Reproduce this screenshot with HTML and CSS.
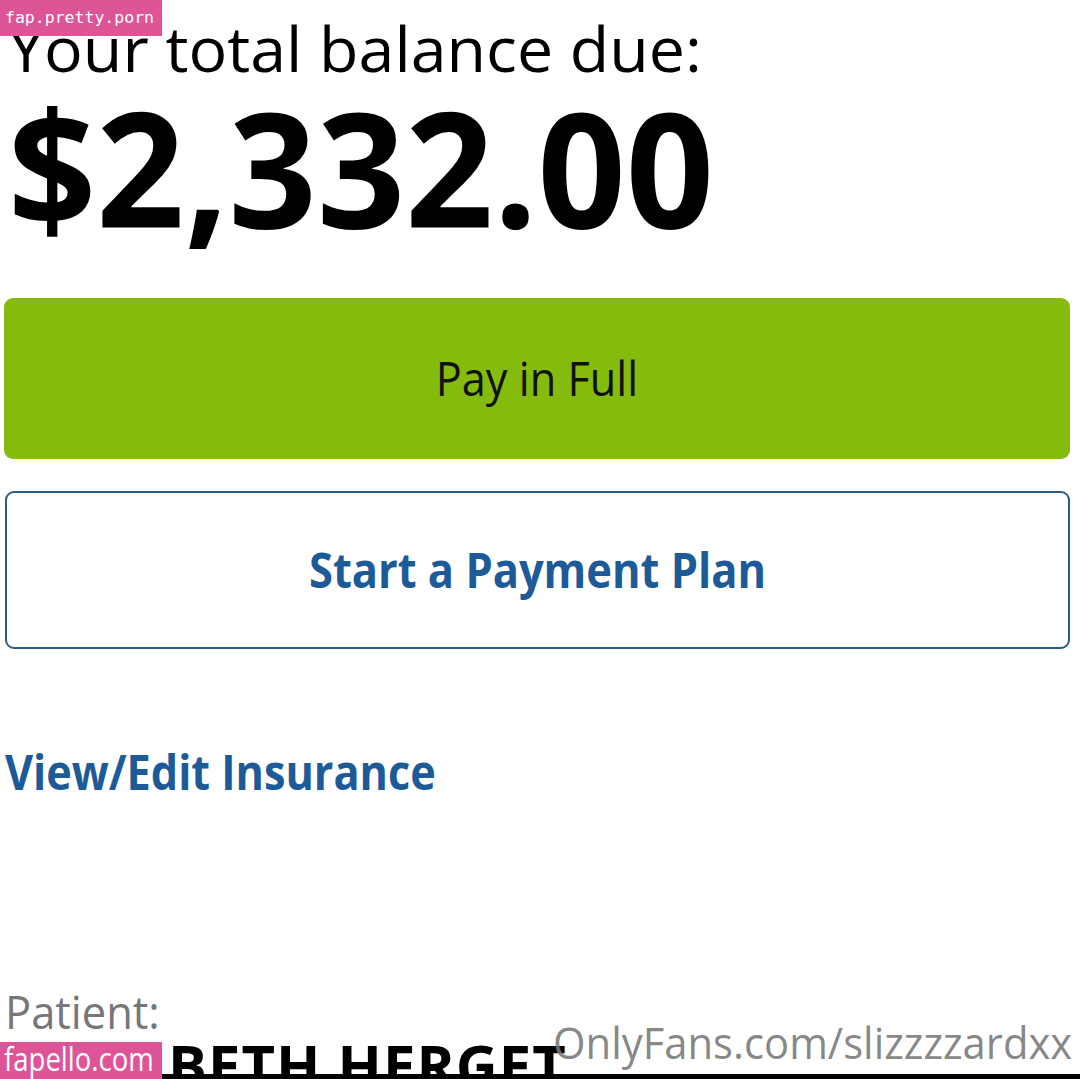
FILE: index.html
```html
<!DOCTYPE html>
<html lang="en">
<head>
<meta charset="utf-8">
<title>Balance due</title>
<link rel="stylesheet" href="styles.css">
</head>
<body>
<main class="page">
  <p class="label"><span class="cond sx-label">Your total balance due:</span></p>
  <p class="amount"><span class="cond sx-amount">$2,332.00</span></p>
  <button class="btn btn-pay"><span class="cond cond-c sx-pay">Pay in Full</span></button>
  <button class="btn btn-plan"><span class="cond cond-c sx-plan">Start a Payment Plan</span></button>
  <a class="link" href="#"><span class="cond sx-link">View/Edit Insurance</span></a>
  <p class="patient-label"><span class="cond sx-patient">Patient:</span></p>
  <p class="patient-name"><span class="cond sx-name">ELIZABETH HERGET</span></p>
  <div class="rule"></div>
</main>
<div class="wm wm-top">fap.pretty.porn</div>
<div class="wm wm-bottom"><span class="cond sx-fapello">fapello.com</span></div>
<div class="wm wm-of"><span class="cond sx-of">OnlyFans.com/slizzzzardxx</span></div>
</body>
</html>
```

FILE: styles.css
```css
html, body {
  margin: 0;
  padding: 0;
  background: #ffffff;
  overflow: hidden;
}
body {
  width: 1080px;
  height: 1079px;
  position: relative;
  font-family: "Open Sans", "Noto Sans", sans-serif;
}
.page {
  display: flex;
  flex-direction: column;
  align-items: stretch;
  padding: 0 10px 0 4px;
}
.cond {
  display: inline-block;
  transform-origin: 0 50%;
  white-space: nowrap;
}
.cond-c {
  transform-origin: 50% 50%;
}
.sx-label { transform: scaleX(1.04); }
.sx-amount { transform: scaleX(0.965); }
.sx-pay { transform: scaleX(0.92); }
.sx-plan { transform: scaleX(0.905); }
.sx-link { transform: scaleX(0.90); }
.sx-patient { transform: scaleX(0.945); }
.sx-name { transform: scaleX(1.0); letter-spacing: 1px; }
.sx-fapello { transform: scaleX(0.86); }
.sx-of { transform: scaleX(0.95); }

.label {
  margin: 13px 0 0 4px;
  font-size: 62px;
  line-height: 70px;
  color: #000;
}
.amount {
  margin: 3px 0 0 4px;
  font-size: 160px;
  line-height: 160px;
  font-weight: 700;
  color: #000;
}
.btn {
  display: flex;
  align-items: center;
  justify-content: center;
  font-family: inherit;
  line-height: 1;
  border-radius: 9px;
  cursor: pointer;
  padding: 0;
}
.btn-pay {
  margin-top: 52px;
  height: 161px;
  background: #84bb0c;
  border: none;
  color: #111;
  font-size: 47px;
  font-weight: 400;
}
.btn-plan {
  margin-top: 32px;
  height: 158px;
  background: #fff;
  border: 2px solid #2b5b87;
  color: #1d5b98;
  font-size: 48px;
  font-weight: 700;
  margin-left: 1px;
}
.link {
  margin: 99px 0 0 1px;
  font-size: 48px;
  line-height: 48px;
  font-weight: 700;
  color: #1d5b98;
  text-decoration: none;
  align-self: flex-start;
}
.patient-label {
  margin: 192px 0 0 1px;
  font-size: 46px;
  line-height: 46px;
  color: #777;
}
.patient-name {
  margin: 2px 0 0 1px;
  font-size: 58px;
  line-height: 58px;
  font-weight: 700;
  color: #000;
  height: 38px;
}
.rule {
  height: 8px;
  background: #000;
  margin: 0 -10px 0 -4px;
}
.wm {
  position: absolute;
  color: #fff;
}
.wm-top {
  top: 0;
  left: 0;
  width: 162px;
  height: 36px;
  background: #dd5597;
  font-family: "DejaVu Sans Mono", monospace;
  font-size: 16.5px;
  line-height: 36px;
  padding-left: 5px;
  box-sizing: border-box;
}
.wm-bottom {
  left: 0;
  top: 1042px;
  width: 162px;
  height: 37px;
  background: #dd5597;
  font-family: "Open Sans", sans-serif;
  font-size: 32px;
  line-height: 34px;
  padding-left: 4px;
  box-sizing: border-box;
}
.wm-of {
  left: 553px;
  top: 1014px;
  color: rgba(120, 120, 120, 0.9);
  font-family: "Open Sans", sans-serif;
  font-size: 44px;
  line-height: 56px;
}
```
